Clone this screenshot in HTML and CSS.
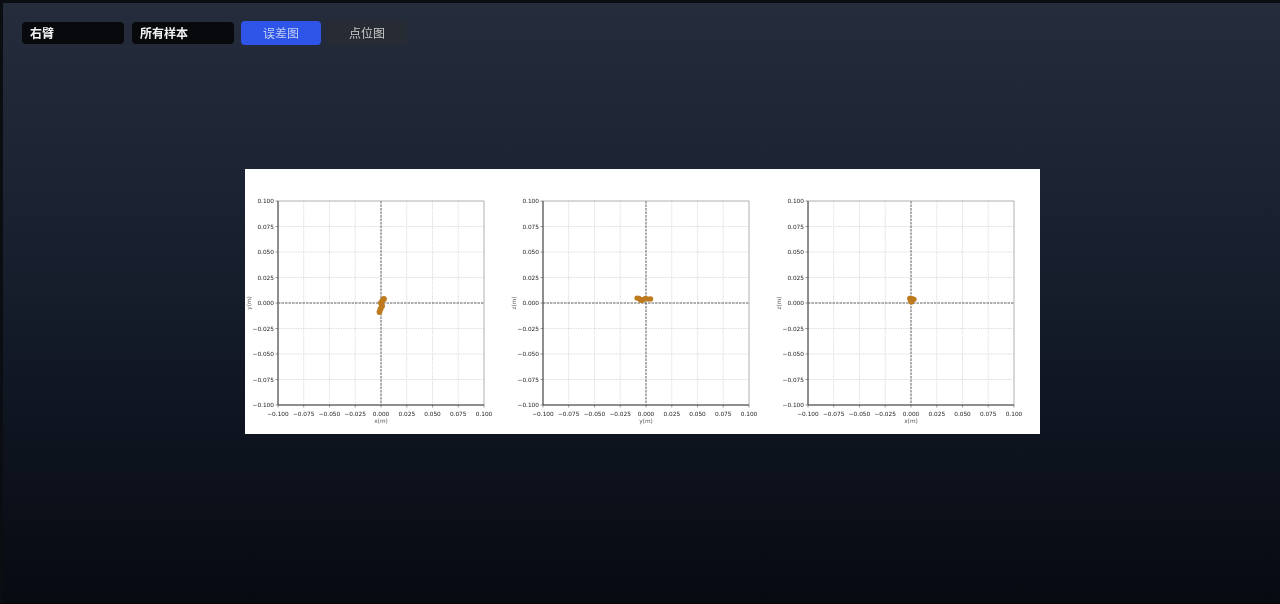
FILE: index.html
```html
<!DOCTYPE html>
<html>
	<head>
		<meta charset="utf-8">
		<title>误差图</title>
		<link rel="stylesheet" href="styles.css">
	</head>
	<body>
		<div class="toolbar">
			<div class="select">右臂</div>
			<div class="select">所有样本</div>
			<div class="btn btn-active">误差图</div>
			<div class="btn">点位图</div>
		</div>

		<div class="chart-wrap">
			<div class="chart-card">
				<svg class="plot" width="265" height="265" viewBox="0 0 265 265">
					<defs>
						<g id="grid">
							<path class="grid-line" d="M58.7 32V236M84.5 32V236M110.2 32V236M161.8 32V236M187.5 32V236M213.2 32V236M33 57.5H239M33 83H239M33 108.5H239M33 159.5H239M33 185H239M33 210.5H239"/>
							<path class="axis-line" d="M136 32V236M33 134H239"/>
							<path class="frame" d="M33 32H239V236H33Z"/>
							<path class="frame-dark" d="M33 32V236H239"/>
							<path class="tick" d="M30.5 32H33M30.5 57.5H33M30.5 83H33M30.5 108.5H33M30.5 134H33M30.5 159.5H33M30.5 185H33M30.5 210.5H33M30.5 236H33M33 236V238.5M58.7 236V238.5M84.5 236V238.5M110.2 236V238.5M136 236V238.5M161.8 236V238.5M187.5 236V238.5M213.2 236V238.5M239 236V238.5"/>
						</g>
					</defs>
					<use href="#grid"/>
					<g class="ylabels">
						<text x="29" y="34">0.100</text><text x="29" y="59.5">0.075</text><text x="29" y="85">0.050</text>
						<text x="29" y="110.5">0.025</text><text x="29" y="136">0.000</text><text x="29" y="161.5">−0.025</text>
						<text x="29" y="187">−0.050</text><text x="29" y="212.5">−0.075</text><text x="29" y="238">−0.100</text>
					</g>
					<g class="xlabels">
						<text x="33" y="247">−0.100</text><text x="58.7" y="247">−0.075</text><text x="84.5" y="247">−0.050</text>
						<text x="110.2" y="247">−0.025</text><text x="136" y="247">0.000</text><text x="161.8" y="247">0.025</text>
						<text x="187.5" y="247">0.050</text><text x="213.2" y="247">0.075</text><text x="239" y="247">0.100</text>
					</g>
					<text class="axis-name" x="136" y="254">x(m)</text>
					<text class="axis-name" transform="translate(6 134) rotate(-90)">y(m)</text>
					<g class="points">
						<circle cx="139" cy="130" r="2.9"/><circle cx="137.5" cy="131.5" r="2.9"/><circle cx="136" cy="134" r="3"/>
						<circle cx="137" cy="137" r="3"/><circle cx="135.5" cy="140" r="3"/><circle cx="134.5" cy="143" r="2.9"/>
					</g>
				</svg>
				<svg class="plot" width="265" height="265" viewBox="0 0 265 265">
					<use href="#grid"/>
					<g class="ylabels">
						<text x="29" y="34">0.100</text><text x="29" y="59.5">0.075</text><text x="29" y="85">0.050</text>
						<text x="29" y="110.5">0.025</text><text x="29" y="136">0.000</text><text x="29" y="161.5">−0.025</text>
						<text x="29" y="187">−0.050</text><text x="29" y="212.5">−0.075</text><text x="29" y="238">−0.100</text>
					</g>
					<g class="xlabels">
						<text x="33" y="247">−0.100</text><text x="58.7" y="247">−0.075</text><text x="84.5" y="247">−0.050</text>
						<text x="110.2" y="247">−0.025</text><text x="136" y="247">0.000</text><text x="161.8" y="247">0.025</text>
						<text x="187.5" y="247">0.050</text><text x="213.2" y="247">0.075</text><text x="239" y="247">0.100</text>
					</g>
					<text class="axis-name" x="136" y="254">y(m)</text>
					<text class="axis-name" transform="translate(6 134) rotate(-90)">z(m)</text>
					<g class="points">
						<circle cx="127" cy="129" r="2.6"/><circle cx="129" cy="129.5" r="2.7"/><circle cx="131" cy="131" r="3"/>
						<circle cx="133" cy="131" r="2.7"/><circle cx="135.5" cy="129.5" r="2.7"/><circle cx="138" cy="130" r="2.6"/><circle cx="140.5" cy="130" r="2.7"/>
					</g>
				</svg>
				<svg class="plot" width="265" height="265" viewBox="0 0 265 265">
					<use href="#grid"/>
					<g class="ylabels">
						<text x="29" y="34">0.100</text><text x="29" y="59.5">0.075</text><text x="29" y="85">0.050</text>
						<text x="29" y="110.5">0.025</text><text x="29" y="136">0.000</text><text x="29" y="161.5">−0.025</text>
						<text x="29" y="187">−0.050</text><text x="29" y="212.5">−0.075</text><text x="29" y="238">−0.100</text>
					</g>
					<g class="xlabels">
						<text x="33" y="247">−0.100</text><text x="58.7" y="247">−0.075</text><text x="84.5" y="247">−0.050</text>
						<text x="110.2" y="247">−0.025</text><text x="136" y="247">0.000</text><text x="161.8" y="247">0.025</text>
						<text x="187.5" y="247">0.050</text><text x="213.2" y="247">0.075</text><text x="239" y="247">0.100</text>
					</g>
					<text class="axis-name" x="136" y="254">x(m)</text>
					<text class="axis-name" transform="translate(6 134) rotate(-90)">z(m)</text>
					<g class="points">
						<circle cx="134.8" cy="129.5" r="2.7"/><circle cx="137" cy="130" r="3"/><circle cx="139" cy="130.3" r="2.6"/>
						<circle cx="136" cy="132" r="3"/><circle cx="136.5" cy="133" r="2.6"/>
					</g>
				</svg>
			</div>
		</div>
	</body>
</html>
```

FILE: styles.css
```css
html,body{
	height: 100%;
	margin: 0;
}
body{
	box-sizing: border-box;
	overflow: hidden;
	border-top: 3px solid #0a0d11;
	border-left: 3px solid #0a0d11;
	border-bottom: 2px solid #05070a;
	background: linear-gradient(180deg, #252d3d 0%, #1a2231 35%, #0f1521 68%, #070a11 100%);
	font-family: "Liberation Sans", "Noto Sans CJK SC", sans-serif;
	font-size: 12px;
}
.toolbar{
	display: flex;
	align-items: center;
	padding: 18px 0 0 19px;
	height: 24px;
	filter: blur(0.4px);
}
.select{
	box-sizing: border-box;
	width: 102px;
	height: 22px;
	line-height: 24px;
	margin-right: 8px;
	padding-left: 8px;
	border-radius: 4px;
	background: #07090c;
	color: #f2f2f2;
	font-weight: bold;
}
.select + .select{
	margin-right: 7px;
}
.btn{
	width: 80px;
	height: 24px;
	line-height: 26px;
	margin-right: 6px;
	border-radius: 4px;
	background: #272b33;
	color: #c9c9c9;
	text-align: center;
}
.btn-active{
	background: #2f55e8;
	color: #c3cff5;
}
.chart-wrap{
	display: flex;
	justify-content: center;
	padding: 124px 0 0 2px;
}
.chart-card{
	display: grid;
	grid-template-columns: repeat(3, 265px);
	height: 265px;
	background: #fff;
	filter: blur(0.7px);
}
.plot{
	display: block;
}
.grid-line{
	fill: none;
	stroke: #c4cac9;
	stroke-width: 0.6;
	stroke-dasharray: 1.5 1;
}
.axis-line{
	fill: none;
	stroke: #333;
	stroke-width: 0.8;
	stroke-dasharray: 2.5 1;
}
.frame{
	fill: none;
	stroke: #9a9fa0;
	stroke-width: 0.8;
}
.frame-dark{
	fill: none;
	stroke: #333;
	stroke-width: 0.9;
}
.tick{
	fill: none;
	stroke: #555;
	stroke-width: 0.6;
}
.ylabels text,.xlabels text,.axis-name{
	font-family: "DejaVu Sans", sans-serif;
	font-size: 5.8px;
	fill: #222;
}
.ylabels text{
	text-anchor: end;
}
.xlabels text,.axis-name{
	text-anchor: middle;
}
.axis-name{
	fill: #555;
}
.points circle{
	fill: #bd7a1f;
}
```
